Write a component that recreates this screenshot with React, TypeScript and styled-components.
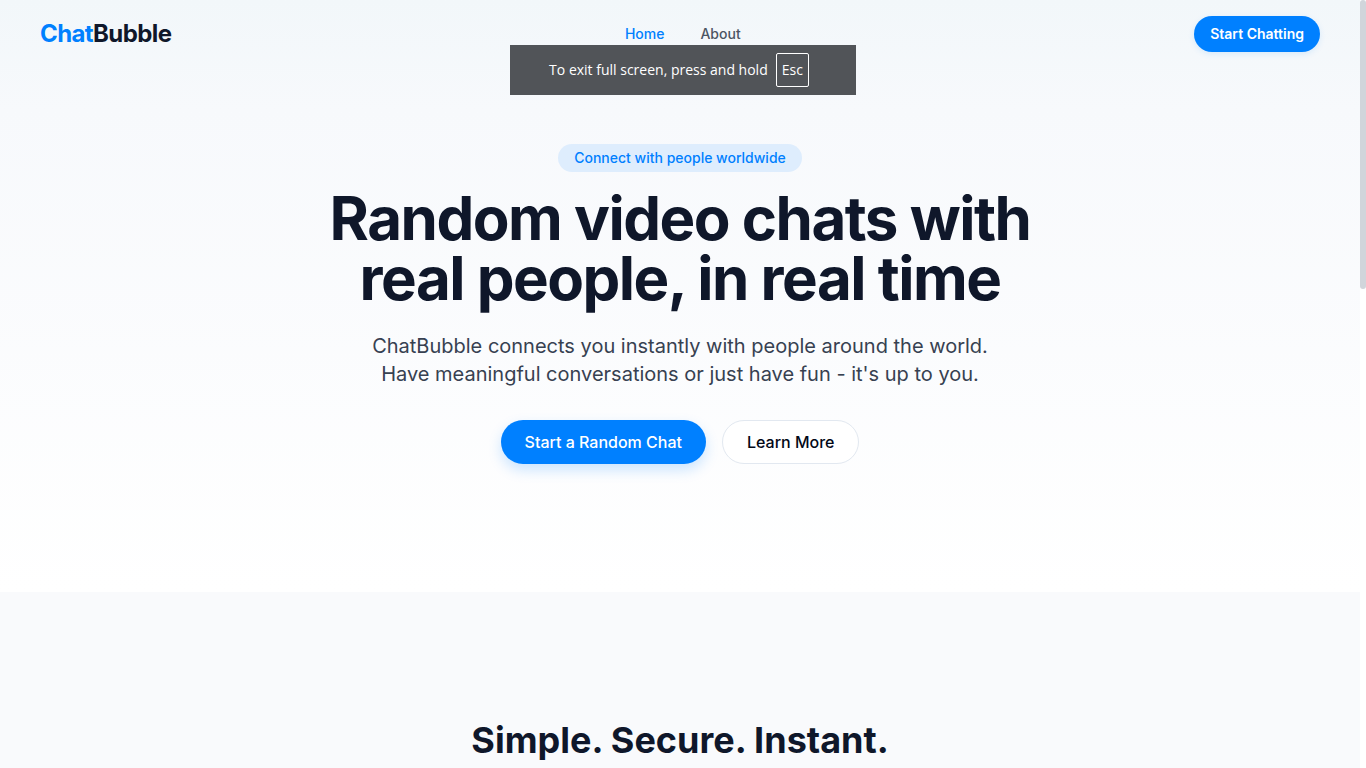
import React from "react";
import styled, { createGlobalStyle } from "styled-components";

const GlobalStyle = createGlobalStyle`
  *, *::before, *::after { box-sizing: border-box; }
  body {
    margin: 0;
    background: #ffffff;
    color: #0f172a;
    font-family: Inter, "Liberation Sans", sans-serif;
  }
  h1, h2, p { margin: 0; }
`;

const Shell = styled.div`
  display: flex;
  height: 100vh;
  overflow: hidden;
`;

const Page = styled.div`
  flex: 1;
  min-width: 0;
  overflow: hidden;
`;

const ScrollTrack = styled.div`
  flex: 0 0 6px;
  background: #ffffff;
`;

const ScrollThumb = styled.div`
  height: 289px;
  border-radius: 3px;
  background: #d1d5db;
`;

const Top = styled.div`
  background: linear-gradient(to bottom, #f2f7fa 0, #f7f9fc 110px, #ffffff 100%);
`;

const Header = styled.header`
  display: flex;
  align-items: center;
  justify-content: space-between;
  padding: 16px 40px;
`;

const Logo = styled.a`
  color: #0f172a;
  font-size: 24px;
  line-height: 32px;
  font-weight: 700;
  letter-spacing: -0.025em;
  text-decoration: none;
`;

const LogoAccent = styled.span`
  color: #0080ff;
`;

const Nav = styled.nav`
  display: flex;
  gap: 36px;
`;

const NavLink = styled.a<{ $active?: boolean }>`
  color: ${(p) => (p.$active ? "#0080ff" : "#4b5563")};
  font-size: 14px;
  line-height: 20px;
  font-weight: 500;
  text-decoration: none;
`;

const Button = styled.button<{ $variant?: "primary" | "outline"; $small?: boolean }>`
  height: ${(p) => (p.$small ? 36 : 44)}px;
  padding: 0 ${(p) => (p.$small ? 16 : 24)}px;
  border: ${(p) => (p.$variant === "outline" ? "1px solid #e2e8f0" : "0")};
  border-radius: 9999px;
  background: ${(p) => (p.$variant === "outline" ? "#ffffff" : "#0080ff")};
  color: ${(p) => (p.$variant === "outline" ? "#020817" : "#ffffff")};
  box-shadow: ${(p) =>
    p.$variant === "outline"
      ? "none"
      : p.$small
        ? "0 2px 6px rgba(0, 128, 255, 0.12)"
        : "0 6px 14px rgba(0, 128, 255, 0.2)"};
  font-family: inherit;
  font-size: ${(p) => (p.$small ? 14 : 16)}px;
  font-weight: ${(p) => (p.$small ? 600 : 500)};
  line-height: 24px;
  cursor: pointer;
`;

const Hero = styled.section`
  display: flex;
  flex-direction: column;
  align-items: center;
  padding: 76px 24px 128px;
  text-align: center;
`;

const Badge = styled.span`
  padding: 4px 16px;
  border-radius: 9999px;
  background: #deedfd;
  color: #0080ff;
  font-size: 14px;
  line-height: 20px;
  font-weight: 500;
`;

const Title = styled.h1`
  max-width: 768px;
  margin-top: 16px;
  font-size: 60px;
  line-height: 60px;
  font-weight: 700;
  letter-spacing: -0.025em;
`;

const Lead = styled.p`
  max-width: 640px;
  margin-top: 24px;
  color: #374151;
  font-size: 20px;
  line-height: 28px;
`;

const Actions = styled.div`
  display: flex;
  gap: 16px;
  margin-top: 32px;
`;

const Features = styled.section`
  min-height: 400px;
  padding: 128px 24px;
  background: #f9fafc;
  text-align: center;
`;

const SectionTitle = styled.h2`
  font-size: 36px;
  line-height: 40px;
  font-weight: 700;
`;

const FullscreenNotice = styled.div`
  position: fixed;
  top: 45px;
  left: 50%;
  transform: translateX(-50%);
  display: flex;
  align-items: center;
  justify-content: center;
  gap: 8px;
  width: 346px;
  height: 50px;
  padding-right: 8px;
  background: #515458;
  color: #ffffff;
  font-family: "Open Sans", "Noto Sans", sans-serif;
  font-size: 14px;
  line-height: 20px;
  white-space: nowrap;
`;

const Key = styled.kbd`
  padding: 6px 5px;
  border: 1px solid #ffffff;
  border-radius: 2px;
  font: inherit;
`;

export default function App() {
  return (
    <>
      <GlobalStyle />
      <Shell>
        <Page>
          <Top>
            <Header>
              <Logo href="#">
                <LogoAccent>Chat</LogoAccent>Bubble
              </Logo>
              <Nav>
                <NavLink href="#" $active>Home</NavLink>
                <NavLink href="#about">About</NavLink>
              </Nav>
              <Button $small>Start Chatting</Button>
            </Header>
            <Hero>
              <Badge>Connect with people worldwide</Badge>
              <Title>Random video chats with real people, in real time</Title>
              <Lead>
                ChatBubble connects you instantly with people around the world.
                Have meaningful conversations or just have fun - it's up to you.
              </Lead>
              <Actions>
                <Button>Start a Random Chat</Button>
                <Button $variant="outline">Learn More</Button>
              </Actions>
            </Hero>
          </Top>
          <Features>
            <SectionTitle>Simple. Secure. Instant.</SectionTitle>
          </Features>
        </Page>
        <ScrollTrack>
          <ScrollThumb />
        </ScrollTrack>
      </Shell>
      <FullscreenNotice role="status">
        <span>To exit full screen, press and hold</span>
        <Key>Esc</Key>
      </FullscreenNotice>
    </>
  );
}
